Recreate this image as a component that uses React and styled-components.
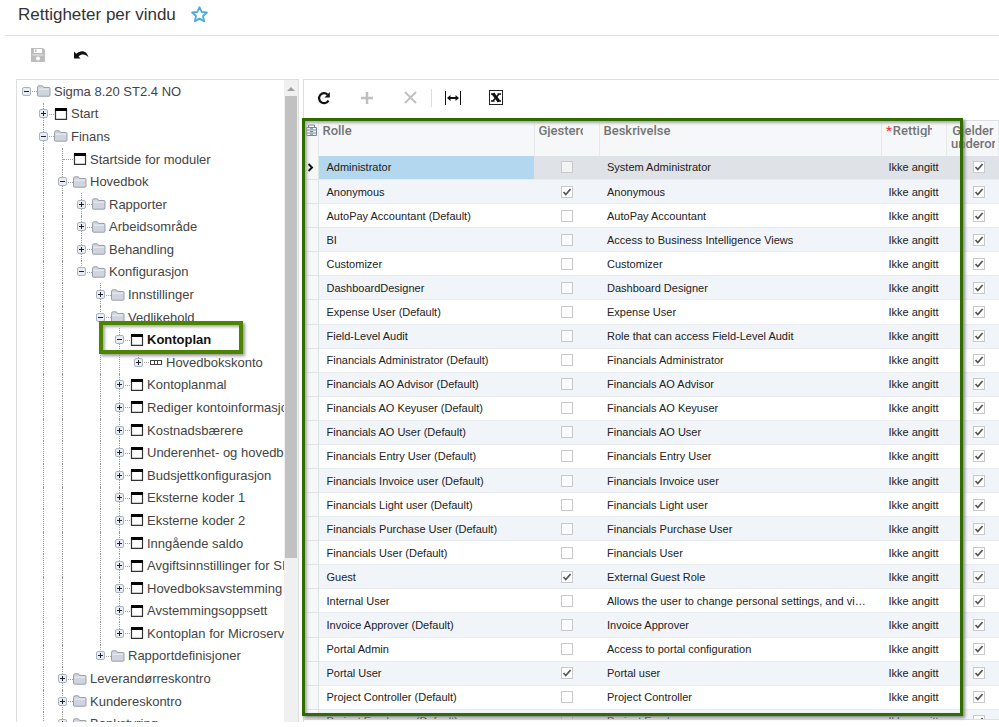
import React from 'react';
import styled, {createGlobalStyle, css} from 'styled-components';

const GlobalStyle = createGlobalStyle`
  * {
    box-sizing: border-box;
  }
  html, body, #root {
    height: 100%;
  }
  body {
    margin: 0;
    background: #fff;
    color: #333;
    font-family: "Liberation Sans", Arial, sans-serif;
    overflow: hidden;
  }
`;

const Screen = styled.div`
  height: 100%;
  display: flex;
  flex-direction: column;
  padding-bottom: 5px;
`;

const Header = styled.header`
  display: flex;
  align-items: center;
  gap: 15px;
  height: 36px;
  margin-left: 5px;
  padding: 0 0 6px 13px;
  border-bottom: 1px solid #e0e0e0;

  h1 {
    margin: 0;
    font-size: 17px;
    font-weight: 400;
  }
`;

const IconButton = styled.button`
  display: flex;
  align-items: center;
  justify-content: center;
  width: 18px;
  height: 18px;
  padding: 0;
  border: 0;
  background: none;
  color: ${(p) => (p.disabled ? '#c0c0c0' : '#111')};
`;

const PageToolbar = styled.div`
  display: flex;
  align-items: center;
  gap: 25px;
  height: 43px;
  padding: 0 0 6px 29px;
`;

const Content = styled.main`
  flex: 1;
  min-height: 0;
  display: flex;
  gap: 4px;
  padding-left: 16px;
`;

const TreePane = styled.nav`
  flex: 0 0 283px;
  display: flex;
  overflow: hidden;
  border: 1px solid #dedede;
  border-bottom: 0;
`;

const TreeList = styled.ul`
  flex: 1;
  min-width: 0;
  display: grid;
  grid-template-columns: 100%;
  grid-auto-rows: 1fr;
  height: 655px;
  margin: 0;
  padding: 0;
  overflow: hidden;
  list-style: none;
`;

const TreeRow = styled.li`
  position: relative;
  display: flex;
  align-items: stretch;
  padding-left: ${(p) => (p.$root ? 0 : 17)}px;
  font-size: 13px;
  font-weight: ${(p) => (p.$active ? 700 : 400)};
  color: ${(p) => (p.$active ? '#111' : '#444')};
  white-space: nowrap;
`;

const Guide = styled.span`
  flex: 0 0 19px;
  padding-left: 9px;

  &::before {
    content: '';
    display: block;
    height: 100%;
    border-left: ${(p) => (p.$line ? '1px dotted #999' : '0')};
  }
`;

const Branch = styled.span`
  flex: 0 0 19px;
  position: relative;
  display: flex;
  align-items: center;
  justify-content: center;

  /* dotted connector running to the row icon */
  &::after {
    content: '';
    position: absolute;
    top: 50%;
    left: 50%;
    width: 10px;
    border-top: 1px dotted #a0a0a0;
  }

  ${(p) => p.$line && css`
    &::before {
      content: '';
      position: absolute;
      top: 0;
      left: 9px;
      height: ${p.$last ? '50%' : '100%'};
      border-left: 1px dotted #999;
    }
  `}
`;

const Expander = styled.button`
  position: relative;
  z-index: 1;
  display: flex;
  padding: 0;
  border: 0;
  background: #fff;
`;

const TreeLabel = styled.a`
  display: flex;
  align-items: center;
  gap: 3px;
  color: inherit;
  text-decoration: none;

  svg {
    flex: none;
  }
`;

const RowHighlight = styled.span`
  position: absolute;
  z-index: 2;
  top: -7px;
  left: 82px;
  width: 144px;
  height: 33px;
  border: 4px solid #4c8400;
  box-shadow: 2px 2px 3px #999, inset 2px 2px 3px #aaa;
  pointer-events: none;
`;

const Scrollbar = styled.div`
  flex: 0 0 14px;
  display: flex;
  flex-direction: column;
  align-items: center;
  background: #f0f0f0;

  svg {
    flex: none;
    margin: 7px 0 5px;
  }
`;

const Thumb = styled.div`
  width: 12px;
  height: 72%;
  background: #c1c1c1;
`;

const GridPane = styled.section`
  flex: 1;
  min-width: 0;
  display: flex;
  flex-direction: column;
  border: 1px solid #dedede;
  border-width: 1px 0 0 1px;
`;

const GridToolbar = styled.div`
  flex: none;
  display: flex;
  align-items: center;
  height: 40px;
  padding: 0 0 5px 11px;
  gap: 25px;
`;

const Divider = styled.span`
  width: 1px;
  height: 18px;
  margin: 0 -13px;
  background: #ddd;
`;

const GridBody = styled.div`
  position: relative;
  flex: 1;
  min-height: 0;
  padding-bottom: 2px;
`;

const GridClip = styled.div`
  height: 100%;
  overflow: hidden;
  border-bottom: 1px solid #dedede;
`;

const GridHighlight = styled.div`
  position: absolute;
  z-index: 2;
  top: -2px;
  left: -2px;
  right: 36px;
  bottom: 6px;
  border: 3px solid #306c00;
  box-shadow: 2px 2px 3px #888, inset 2px 2px 3px #aaa;
  pointer-events: none;
`;

const Table = styled.table`
  width: 100%;
  height: 614px;
  table-layout: fixed;
  border-collapse: collapse;
  border-top: 1px solid #dedede;
  font-size: 11px;
  color: #222;
`;

const Th = styled.th`
  height: 35px;
  padding: 3px 4px 0;
  overflow: hidden;
  vertical-align: top;
  border-right: 1px solid #e6e8ea;
  background: #f5f7f9;
  color: #747474;
  font-family: Roboto, "Liberation Sans", sans-serif;
  font-size: 13px;
  font-weight: 500;
  line-height: 13px;
  text-align: ${(p) => (p.$center ? 'center' : 'left')};

  &:first-child {
    padding-left: 2px;
  }

  > span {
    display: block;
    width: ${(p) => (p.$clip ? `${p.$clip}px` : 'auto')};
    overflow: hidden;
    white-space: nowrap;
  }

  i {
    margin-right: 1px;
    color: #f33;
    font-style: normal;
  }
`;

const Tr = styled.tr`
  background: ${(p) => (p.$selected ? '#dfe2e7' : '#fff')};

  &:nth-child(even) {
    background: #f1f5fa;
  }
`;

const Td = styled.td`
  height: 24px;
  padding: 0 8px;
  overflow: hidden;
  border-bottom: 1px solid #e9ecef;
  background: ${(p) => (p.$selected ? '#b3d7ef' : 'transparent')};
  text-overflow: ellipsis;
  white-space: nowrap;
`;

const DescriptionCell = styled(Td)`
  padding-right: 12px;
`;

const RightsCell = styled(Td)`
  padding: 0 0 0 7px;
`;

const CheckCell = styled(Td)`
  padding: ${(p) => (p.$shift ? '0 0 0 13px' : '0')};
`;

const Marker = styled.td`
  padding: 0;
  border-right: 1px solid #e0e3e6;
  border-bottom: 1px solid #e0e3e6;
  background: #f5f7f9;

  svg {
    display: block;
    margin: 0 auto;
  }
`;

const Check = styled.input`
  appearance: none;
  display: block;
  width: 12px;
  height: 12px;
  margin: 0 auto;
  border: 1px solid #c9c9c9;
  background: rgba(255, 255, 255, 0.6);

  &:checked {
    background: #fff url("data:image/svg+xml,%3Csvg xmlns='http://www.w3.org/2000/svg' viewBox='0 0 10 10'%3E%3Cpath d='M1.5 5l2.3 2.5L8.6 2' fill='none' stroke='%23555' stroke-width='1.8'/%3E%3C/svg%3E");
  }
`;

const FolderIcon = () => (
	<svg width="15" height="12" viewBox="0 0 15 12">
		<path d="M1.500 10V2.500Q1.500 0.800 3 0.800H6Q7 0.800 7.500 2.500H13Q14 2.500 14 3.500V10Q14 11.200 13 11.200H2.500Q1.500 11.200 1.500 10Z" fill="#d0d4de" stroke="#9a9fab"/>
		<path d="M2.500 4.200H13" stroke="#eef0f4"/>
	</svg>
);

const WindowIcon = () => (
	<svg width="15" height="12" viewBox="0 0 15 12">
		<path d="M2.500 1V11.400H13.500V1" fill="#fff" stroke="#333" strokeWidth="1.200"/>
		<path d="M2 0H14V3H2Z" fill="#000"/>
	</svg>
);

const FieldIcon = () => (
	<svg width="15" height="12" viewBox="0 0 15 12">
		<path d="M2 4.500H14M2 8.500H14M2.500 4V9M6.500 4V9M9.500 4V9M13.500 4V9" fill="none" stroke="#444"/>
	</svg>
);

const icons = {folder: FolderIcon, window: WindowIcon, field: FieldIcon};

const ExpanderIcon = ({open}) => (
	<svg width="9" height="9" viewBox="0 0 9 9">
		<rect x="0.5" y="0.5" width="8" height="8" rx="1.5" fill="#e9edf3" stroke="#a9b3c3"/>
		<path d={open ? 'M2 4.5H7' : 'M2 4.5H7M4.5 2V7'} stroke="#222"/>
	</svg>
);

// level, label, icon, open (null = leaf)
const tree = [
	[0, 'Sigma 8.20 ST2.4 NO', 'folder', true],
	[1, 'Start', 'window', false],
	[1, 'Finans', 'folder', true],
	[2, 'Startside for moduler', 'window', null],
	[2, 'Hovedbok', 'folder', true],
	[3, 'Rapporter', 'folder', false],
	[3, 'Arbeidsområde', 'folder', false],
	[3, 'Behandling', 'folder', false],
	[3, 'Konfigurasjon', 'folder', true],
	[4, 'Innstillinger', 'folder', false],
	[4, 'Vedlikehold', 'folder', true],
	[5, 'Kontoplan', 'window', true],
	[6, 'Hovedbokskonto', 'field', false],
	[5, 'Kontoplanmal', 'window', false],
	[5, 'Rediger kontoinformasjon', 'window', false],
	[5, 'Kostnadsbærere', 'window', false],
	[5, 'Underenhet- og hovedbok', 'window', false],
	[5, 'Budsjettkonfigurasjon', 'window', false],
	[5, 'Eksterne koder 1', 'window', false],
	[5, 'Eksterne koder 2', 'window', false],
	[5, 'Inngående saldo', 'window', false],
	[5, 'Avgiftsinnstillinger for SII', 'window', false],
	[5, 'Hovedboksavstemming', 'window', false],
	[5, 'Avstemmingsoppsett', 'window', false],
	[5, 'Kontoplan for Microservice', 'window', false],
	[4, 'Rapportdefinisjoner', 'folder', false],
	[2, 'Leverandørreskontro', 'folder', false],
	[2, 'Kundereskontro', 'folder', false],
	[2, 'Bankstyring', 'folder', false],
];

// levels 1 and 2 go on below the fold, so their lines never end
const hasNext = (index, level) => {
	if (level === 0) return false;
	const next = tree.slice(index + 1).find((row) => row[0] <= level);
	return next ? next[0] === level : level < 3;
};

const roles = [
	['Administrator', 'System Administrator'],
	['Anonymous', 'Anonymous', true],
	['AutoPay Accountant (Default)', 'AutoPay Accountant'],
	['BI', 'Access to Business Intelligence Views'],
	['Customizer', 'Customizer'],
	['DashboardDesigner', 'Dashboard Designer'],
	['Expense User (Default)', 'Expense User'],
	['Field-Level Audit', 'Role that can access Field-Level Audit'],
	['Financials Administrator (Default)', 'Financials Administrator'],
	['Financials AO Advisor (Default)', 'Financials AO Advisor'],
	['Financials AO Keyuser (Default)', 'Financials AO Keyuser'],
	['Financials AO User (Default)', 'Financials AO User'],
	['Financials Entry User (Default)', 'Financials Entry User'],
	['Financials Invoice user (Default)', 'Financials Invoice user'],
	['Financials Light user (Default)', 'Financials Light user'],
	['Financials Purchase User (Default)', 'Financials Purchase User'],
	['Financials User (Default)', 'Financials User'],
	['Guest', 'External Guest Role', true],
	['Internal User', 'Allows the user to change personal settings, and vi…'],
	['Invoice Approver (Default)', 'Invoice Approver'],
	['Portal Admin', 'Access to portal configuration'],
	['Portal User', 'Portal user', true],
	['Project Controller (Default)', 'Project Controller'],
	['Project Employee (Default)', 'Project Employee'],
];

function Tree() {
	return (
		<TreePane aria-label="Vinduer">
			<TreeList>
				{tree.map(([level, label, icon, open], i) => {
					const Icon = icons[icon];
					return (
						<TreeRow key={label} $root={level === 0} $active={label === 'Kontoplan'}>
							{Array.from({length: Math.max(level - 1, 0)}, (_, k) => (
								<Guide key={k} $line={hasNext(i, k + 1)}/>
							))}
							<Branch $line={level > 0} $last={!hasNext(i, level)}>
								{open !== null && (
									<Expander aria-expanded={open} aria-label={label}><ExpanderIcon open={open}/></Expander>
								)}
							</Branch>
							<TreeLabel href="#"><Icon/>{label}</TreeLabel>
							{label === 'Kontoplan' && <RowHighlight/>}
						</TreeRow>
					);
				})}
			</TreeList>
			<Scrollbar>
				<svg width="8" height="4" viewBox="0 0 8 4"><path d="M0 4L4 0L8 4Z" fill="#a0a0a0"/></svg>
				<Thumb/>
			</Scrollbar>
		</TreePane>
	);
}

function RoleGrid() {
	return (
		<GridBody>
			<GridClip>
				<Table>
					<colgroup>
						<col width="14"/>
						<col width="216"/>
						<col width="65"/>
						<col/>
						<col width="65"/>
						<col width="52"/>
					</colgroup>
					<thead>
						<tr>
							<Th>
								<svg width="11" height="13" viewBox="0 0 11 13">
									<path d="M2.5 3V1H8.5V3M0.5 3.5H10.5V11.5H0.5ZM0.5 6H10.5M0.5 9H10.5M4 4.8H7M4 7.5H7M4 10.2H7" fill="none" stroke="#75879a"/>
								</svg>
							</Th>
							<Th><span>Rolle</span></Th>
							<Th $clip={44}><span>Gjesterolle</span></Th>
							<Th><span>Beskrivelse</span></Th>
							<Th $clip={46}><span><i>*</i>Rettighet</span></Th>
							<Th $center $clip={44}><span>Gjelder<br/>underordnet</span></Th>
						</tr>
					</thead>
					<tbody>
						{roles.map(([role, description, guest], i) => (
							<Tr key={role} $selected={i === 0}>
								<Marker>
									{i === 0 && (
										<svg width="7" height="9" viewBox="0 0 7 9"><path d="M1.5 1L5 4.5L1.5 8" fill="none" stroke="#111" strokeWidth="2"/></svg>
									)}
								</Marker>
								<Td $selected={i === 0}>{role}</Td>
								<CheckCell><Check type="checkbox" aria-label={`Gjesterolle ${role}`} defaultChecked={!!guest}/></CheckCell>
								<DescriptionCell>{description}</DescriptionCell>
								<RightsCell>Ikke angitt</RightsCell>
								<CheckCell $shift><Check type="checkbox" aria-label={`Gjelder underordnet ${role}`} defaultChecked/></CheckCell>
							</Tr>
						))}
					</tbody>
				</Table>
			</GridClip>
			<GridHighlight/>
		</GridBody>
	);
}

export default function App() {
	return (
		<Screen>
			<GlobalStyle/>
			<Header>
				<h1>Rettigheter per vindu</h1>
				<IconButton aria-label="Favoritt">
					<svg width="17" height="17" viewBox="0 0 17 17">
						<path d="M8.5 1.2L10.7 6L15.9 6.5L12 10L13.1 15.3L8.5 12.6L3.9 15.3L5 10L1.1 6.5L6.3 6Z" fill="none" stroke="#4aa9e4" strokeWidth="1.8" strokeLinejoin="round"/>
					</svg>
				</IconButton>
			</Header>
			<PageToolbar>
				<IconButton disabled aria-label="Lagre">
					<svg width="14" height="14" viewBox="0 0 14 14">
						<path d="M0 0H12L14 2V14H0Z" fill="#bdbdbd"/>
						<path d="M3 1H11V5H3Z" fill="#fff"/>
						<path d="M4 1.500H5.500V4H4Z" fill="#bdbdbd"/>
						<path d="M1.500 7H12.500" stroke="#e8e8e8"/>
						<circle cx="7" cy="10.500" r="2" fill="#fff"/>
					</svg>
				</IconButton>
				<IconButton aria-label="Angre">
					<svg width="15" height="9" viewBox="0 0 15 9">
						<path d="M0 1.500V8.500H6.500L4.600 6.500C7.500 3.800 11.500 3.800 14.500 7.500C13 0.500 7 -0.500 2.200 3.800Z" fill="#111"/>
					</svg>
				</IconButton>
			</PageToolbar>
			<Content>
				<Tree/>
				<GridPane>
					<GridToolbar>
						<IconButton aria-label="Oppdater">
							<svg width="14" height="14" viewBox="0 0 14 14">
								<path d="M10.500 3.500A5 5 0 1 0 11.500 9.500" fill="none" stroke="#111" strokeWidth="2.200"/>
								<path d="M12.800 1V6.500H7.500Z" fill="#111"/>
							</svg>
						</IconButton>
						<IconButton disabled aria-label="Legg til">
							<svg width="12" height="12" viewBox="0 0 12 12"><path d="M6 0V12M0 6H12" stroke="currentColor" strokeWidth="2.500"/></svg>
						</IconButton>
						<IconButton disabled aria-label="Slett">
							<svg width="13" height="13" viewBox="0 0 13 13"><path d="M1 1L12 12M12 1L1 12" stroke="currentColor" strokeWidth="2"/></svg>
						</IconButton>
						<Divider/>
						<IconButton aria-label="Tilpass bredde">
							<svg width="16" height="14" viewBox="0 0 16 14">
								<path d="M0.500 0V14M15.500 0V14" stroke="#111"/>
								<path d="M3 7H13" stroke="#111" strokeWidth="2"/>
								<path d="M2 7L5.500 4V10ZM14 7L10.500 4V10Z" fill="#111"/>
							</svg>
						</IconButton>
						<IconButton aria-label="Eksporter til Excel">
							<svg width="14" height="15" viewBox="0 0 14 15">
								<rect x="0.500" y="0.500" width="13" height="14" fill="none" stroke="#222"/>
								<path d="M4 3.500L10 11.500" stroke="#111" strokeWidth="3"/>
								<path d="M10 4L4 11M8.500 4H12M2 11H5.500M2 4H6M8 11H12" stroke="#111" strokeWidth="1.500"/>
							</svg>
						</IconButton>
					</GridToolbar>
					<RoleGrid/>
				</GridPane>
			</Content>
		</Screen>
	);
}
